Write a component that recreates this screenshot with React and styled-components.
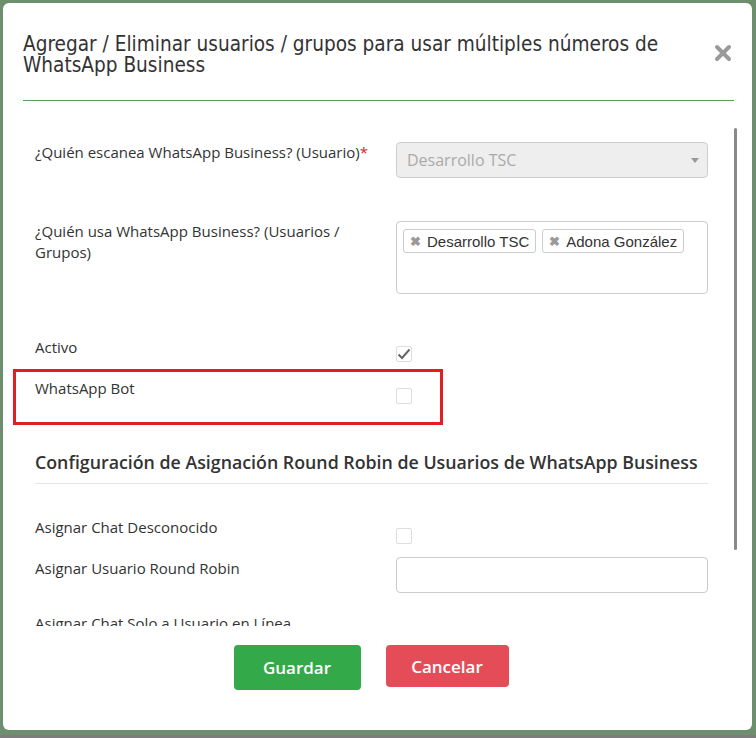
import React from 'react';
import styled, { createGlobalStyle } from 'styled-components';

const GlobalStyle = createGlobalStyle`
  html, body {
    margin: 0;
    padding: 0;
    background: #6e8f6e;
  }
  body {
    font-family: 'Open Sans', 'Liberation Sans', sans-serif;
    color: #333;
  }
`;

const Backdrop = styled.div`
  width: 756px;
  height: 738px;
  padding: 3px 4px 5px 3px;
  box-sizing: border-box;
  background: #6e8f6e;
  border-bottom: 3px solid #7d7d7d;
`;

const Modal = styled.div`
  height: 100%;
  background: #fff;
  border-radius: 6px;
  display: flex;
  flex-direction: column;
`;

const Header = styled.div`
  margin: 0 18px 0 20px;
  padding: 31px 0 24px;
  border-bottom: 1px solid #5a9e5a;
  display: flex;
  justify-content: space-between;
  align-items: flex-start;
`;

const Title = styled.h4`
  margin: 0;
  font-family: 'Liberation Sans Narrow', 'DejaVu Sans Condensed', 'Liberation Sans', sans-serif;
  font-weight: normal;
  font-size: 20.6px;
  line-height: 21px;
  color: #333;
  width: 670px;
`;

const Close = styled.button`
  border: none;
  background: none;
  padding: 0;
  margin: 10px 2px 0 0;
  width: 18px;
  height: 18px;
  cursor: pointer;
`;

const BodyWrap = styled.div`
  display: flex;
  height: 518px;
  margin-top: 7px;
`;

const Content = styled.div`
  flex: 1;
  overflow: hidden;
  padding: 0 0 0 32px;
`;

const Track = styled.div`
  width: 3px;
  margin: 20px 15px 0 12px;
`;

const Thumb = styled.div`
  width: 3px;
  height: 422px;
  background: #888;
  border-radius: 2px;
`;

const Row = styled.div`
  display: grid;
  grid-template-columns: 361px 312px;
  margin-top: ${p => p.$top}px;
  position: relative;
`;

const Label = styled.div`
  font-size: 15px;
  line-height: 21px;
  color: #333;
  padding-right: 20px;
`;

const Req = styled.span`
  color: #e02020;
`;

const Select = styled.div`
  height: 36px;
  box-sizing: border-box;
  border: 1px solid #ccc;
  border-radius: 4px;
  background: #eee;
  display: flex;
  align-items: center;
  justify-content: space-between;
  padding: 0 8px 0 10px;
  font-size: 16px;
  color: #aaa;
`;

const Caret = styled.span`
  width: 0;
  height: 0;
  border-left: 4px solid transparent;
  border-right: 4px solid transparent;
  border-top: 5px solid #999;
`;

const Multi = styled.div`
  height: 73px;
  box-sizing: border-box;
  border: 1px solid #ccc;
  border-radius: 4px;
  padding: 7px 6px;
  display: flex;
  align-items: flex-start;
  gap: 6px;
`;

const Tag = styled.span`
  display: inline-flex;
  align-items: center;
  height: 24px;
  box-sizing: border-box;
  padding: 0 6px 0 6px;
  border: 1px solid #ccc;
  border-radius: 3px;
  font-family: 'Liberation Sans', Arial, sans-serif;
  font-size: 15px;
  color: #333;
`;

const TagX = styled.span`
  color: #999;
  font-weight: bold;
  font-size: 13px;
  margin-right: 6px;
`;

const Check = styled.div`
  width: 16px;
  height: 16px;
  box-sizing: border-box;
  border: 1px solid #ddd;
  border-radius: 2px;
  margin-top: ${p => p.$top}px;
  display: flex;
  align-items: center;
  justify-content: center;
`;

const Input = styled.div`
  height: 36px;
  box-sizing: border-box;
  border: 1px solid #ccc;
  border-radius: 4px;
  margin-top: -1px;
`;

const Highlight = styled.div`
  position: absolute;
  left: -22px;
  top: -9px;
  width: 430px;
  height: 56px;
  border: 3px solid #e02020;
  box-sizing: border-box;
  pointer-events: none;
`;

const Section = styled.h3`
  margin: 46px 0 0;
  width: 673px;
  padding-bottom: 9px;
  border-bottom: 1px solid #e5e5e5;
  font-size: 17.8px;
  font-weight: 600;
  line-height: 24px;
  color: #333;
`;

const Footer = styled.div`
  display: flex;
  justify-content: center;
  gap: 25px;
  padding-top: 19px;
  margin-left: -13px;
`;

const Button = styled.button`
  border: none;
  border-radius: 4px;
  color: #fff;
  font-family: 'Open Sans', sans-serif;
  font-weight: 600;
  font-size: 17px;
  padding: 0;
  width: ${p => p.$w}px;
  height: ${p => p.$h}px;
  background: ${p => p.$bg};
  cursor: pointer;
`;

const CheckMark = () => (
  <svg width="14" height="12" viewBox="0 0 14 12">
    <path d="M1.5 6.5 L5 10 L12.5 1.5" fill="none" stroke="#666" strokeWidth="2" />
  </svg>
);

const CloseIcon = () => (
  <svg width="18" height="18" viewBox="0 0 18 18">
    <path d="M3 3 L15 15 M15 3 L3 15" stroke="#9a9a9a" strokeWidth="4" strokeLinecap="round" />
  </svg>
);

export default function App() {
  return (
    <>
      <GlobalStyle />
      <Backdrop>
        <Modal>
          <Header>
            <Title>
              Agregar / Eliminar usuarios / grupos para usar múltiples números de WhatsApp Business
            </Title>
            <Close aria-label="Cerrar">
              <CloseIcon />
            </Close>
          </Header>
          <BodyWrap>
            <Content>
              <Row $top={34}>
                <Label>
                  ¿Quién escanea WhatsApp Business? (Usuario)<Req>*</Req>
                </Label>
                <Select>
                  Desarrollo TSC
                  <Caret />
                </Select>
              </Row>
              <Row $top={43}>
                <Label>¿Quién usa WhatsApp Business? (Usuarios / Grupos)</Label>
                <Multi>
                  <Tag>
                    <TagX>✖</TagX>Desarrollo TSC
                  </Tag>
                  <Tag>
                    <TagX>✖</TagX>Adona González
                  </Tag>
                </Multi>
              </Row>
              <Row $top={43}>
                <Label>Activo</Label>
                <Check $top={9}>
                  <CheckMark />
                </Check>
              </Row>
              <Row $top={16}>
                <Label>WhatsApp Bot</Label>
                <Check $top={10} />
                <Highlight />
              </Row>
              <Section>
                Configuración de Asignación Round Robin de Usuarios de WhatsApp Business
              </Section>
              <Row $top={33}>
                <Label>Asignar Chat Desconocido</Label>
                <Check $top={11} />
              </Row>
              <Row $top={14}>
                <Label>Asignar Usuario Round Robin</Label>
                <Input />
              </Row>
              <Row $top={20}>
                <Label>Asignar Chat Solo a Usuario en Línea</Label>
                <Check $top={14} />
              </Row>
            </Content>
            <Track>
              <Thumb />
            </Track>
          </BodyWrap>
          <Footer>
            <Button $bg="#34a94a" $w={127} $h={45}>Guardar</Button>
            <Button $bg="#e44d58" $w={123} $h={42}>Cancelar</Button>
          </Footer>
        </Modal>
      </Backdrop>
    </>
  );
}
